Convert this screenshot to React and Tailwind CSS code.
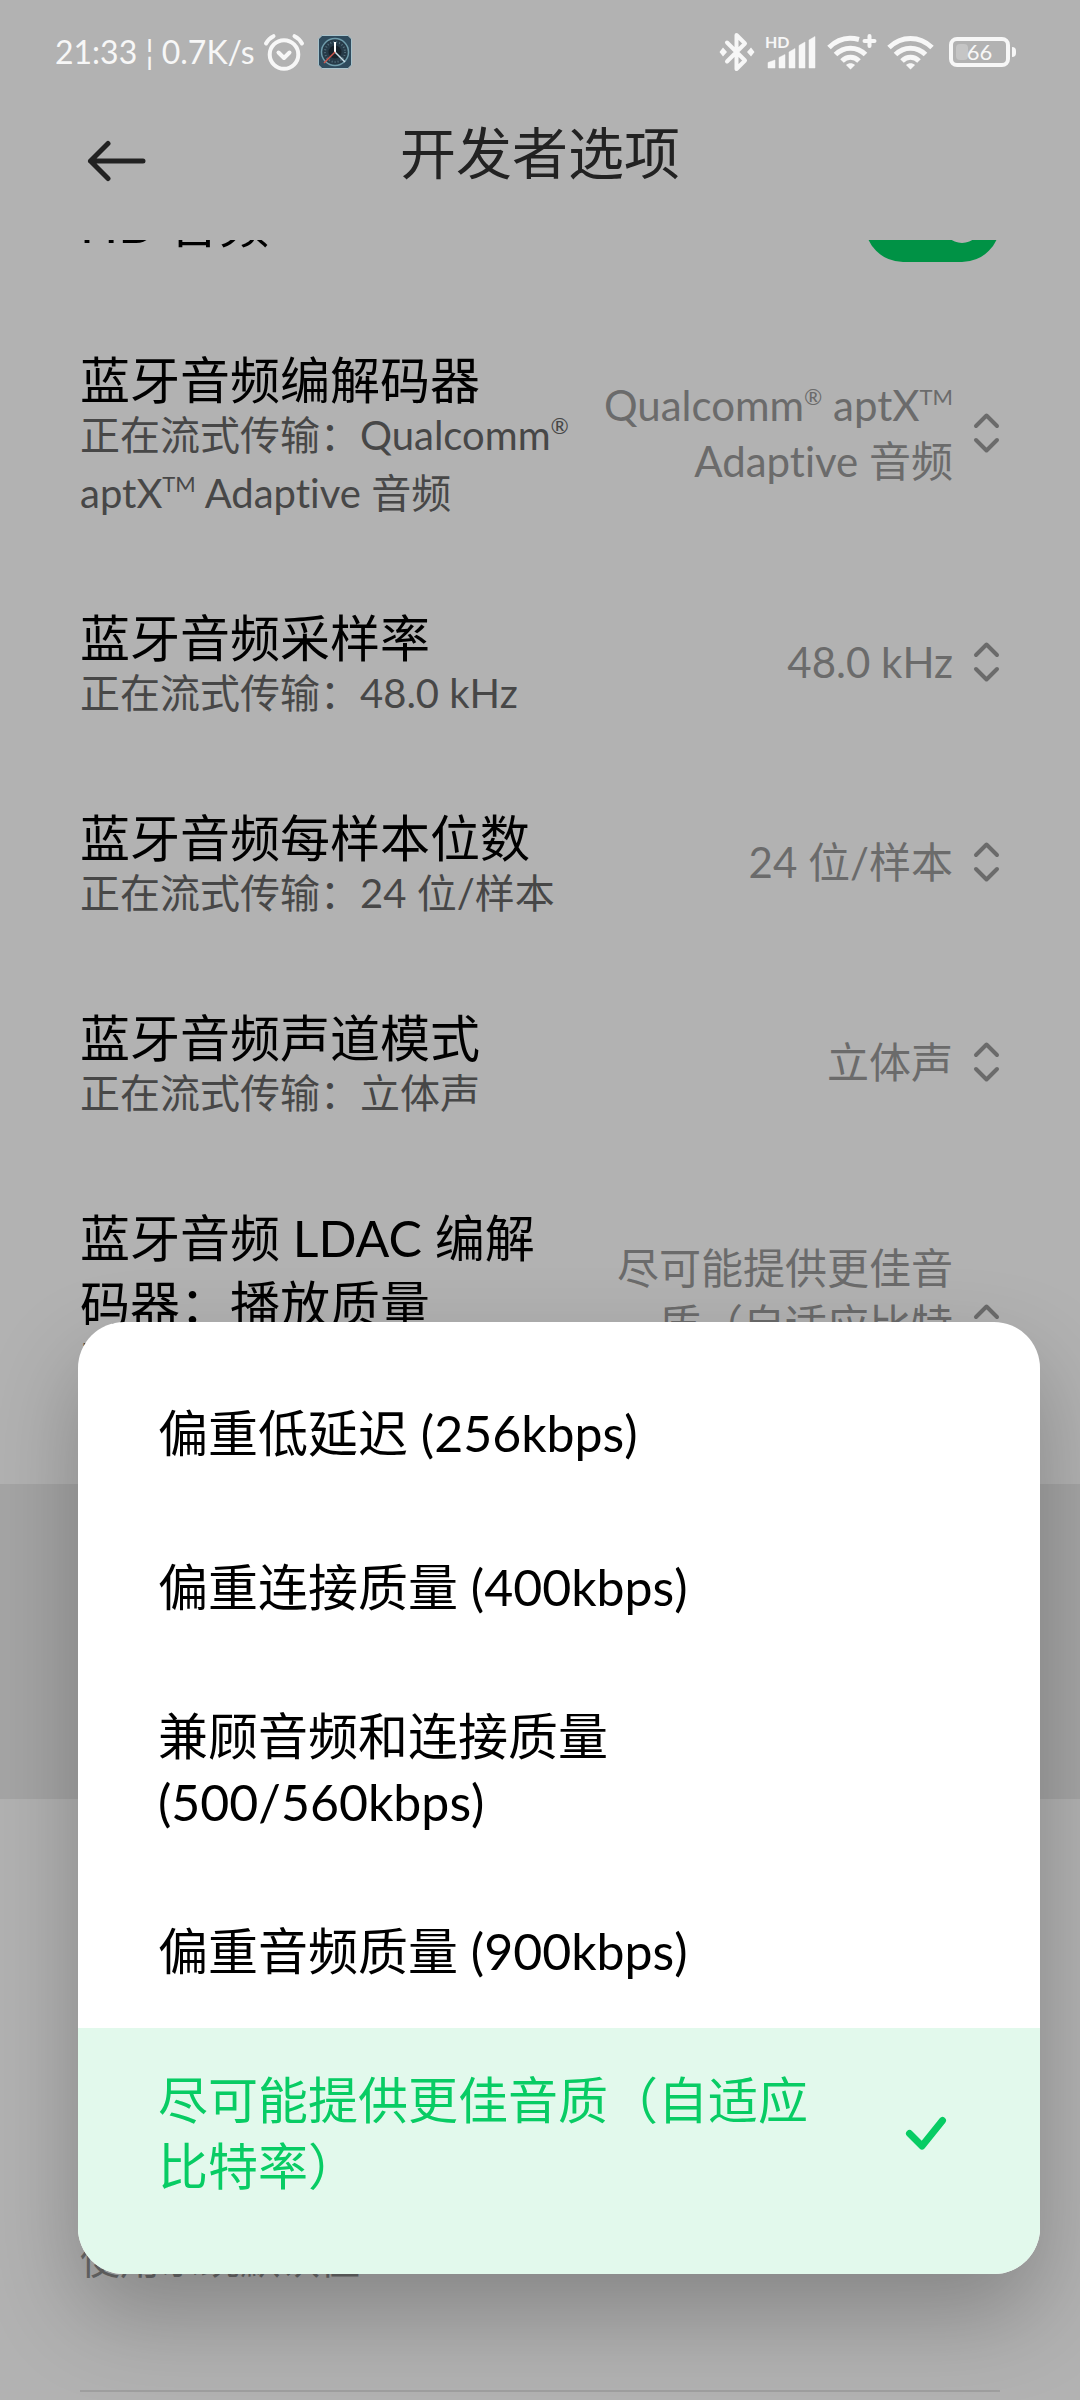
import { useState } from 'react';

const SETTINGS = [
  {
    title: '蓝牙音频编解码器',
    status: <>正在流式传输：Qualcomm<Sup>®</Sup> aptX<Sup>TM</Sup> Adaptive 音频</>,
    value: <>Qualcomm<Sup>®</Sup> aptX<Sup>TM</Sup> Adaptive 音频</>,
  },
  { title: '蓝牙音频采样率', status: '正在流式传输：48.0 kHz', value: '48.0 kHz' },
  { title: '蓝牙音频每样本位数', status: '正在流式传输：24 位/样本', value: '24 位/样本' },
  { title: '蓝牙音频声道模式', status: '正在流式传输：立体声', value: '立体声' },
  {
    title: '蓝牙音频 LDAC 编解码器：播放质量',
    status: '正在流式传输：尽可能提供更佳音质（自适应比特率）',
    value: '尽可能提供更佳音质（自适应比特率）',
  },
];

const OPTIONS = [
  '偏重低延迟 (256kbps)',
  '偏重连接质量 (400kbps)',
  '兼顾音频和连接质量 (500/560kbps)',
  '偏重音频质量 (900kbps)',
  '尽可能提供更佳音质（自适应比特率）',
];

function Sup({ children }) {
  return <sup className="-top-4 text-[22px] leading-none">{children}</sup>;
}

function AlarmIcon() {
  return (
    <svg width="42" height="40" viewBox="0 0 42 40" fill="none" stroke="currentColor" strokeLinecap="round" strokeLinejoin="round" aria-hidden="true">
      <circle cx="21" cy="22.5" r="14.3" strokeWidth="4" />
      <path d="M15.5 20.5 21 26l5.500-5.500" strokeWidth="4" />
      <path d="M3 11.500C4.500 8.500 7 6 10.500 4.200M39 11.500C37.500 8.500 35 6 31.500 4.200" strokeWidth="4" />
    </svg>
  );
}

function ClockAppIcon() {
  return (
    <svg width="34" height="34" viewBox="0 0 34 34" fill="none" aria-hidden="true">
      <path d="M4 .5h26L33.500 4v26L30 33.500H4L.5 30V4z" fill="#2f4b5d" stroke="#a9c3cc" />
      <circle cx="17" cy="17" r="13.500" fill="#263a48" stroke="#6f9cab" strokeWidth="1.500" />
      <circle cx="17" cy="17" r="10" stroke="#54707e" strokeWidth="2" strokeDasharray="1 2" />
      <circle cx="17" cy="17" r="6.500" fill="#17222b" />
      <path d="M17 7v10" stroke="#fff" strokeWidth="2" />
      <path d="m17 17 10 10" stroke="#c9dfe8" strokeWidth="1.500" />
      <path d="M17 17 6 28" stroke="#d0564c" strokeWidth="1.500" />
    </svg>
  );
}

function BluetoothIcon() {
  return (
    <svg width="36" height="40" viewBox="0 0 36 40" aria-hidden="true">
      <path d="m8 10.500 18 18L17.500 37V3L26 11.500l-18 18" fill="none" stroke="currentColor" strokeWidth="4" strokeLinecap="round" strokeLinejoin="round" />
      <path d="m4 15.500 4 4.500-4 4.500L.5 20zM32 15.500l3.500 4.500-3.500 4.500-4-4.500z" fill="currentColor" />
    </svg>
  );
}

function SignalIcon() {
  return (
    <svg width="52" height="36" viewBox="0 0 52 36" fill="currentColor" className="overflow-visible" aria-hidden="true">
      <text x="0" y="14" fontSize="16" fontWeight="700" fontFamily="Lato, sans-serif">HD</text>
      <path d="M3 34v-5.500L10 26v8zM14 34V23.500l6-3V34zM24 34V18l6-3.500V34zM34 34V11.500L40 8v26zM44 34V6l6-3.500V34z" stroke="currentColor" strokeWidth=".5" strokeLinejoin="round" />
    </svg>
  );
}

function WifiIcon({ plus }) {
  return (
    <svg width="50" height="36" viewBox="0 0 50 36" fill="none" stroke="currentColor" strokeWidth="5" aria-hidden="true">
      <path d={plus ? 'M2 13.500C10.500 5 21 2.500 32 5.500' : 'M2 13.500C14.500 1.500 32.500 1.500 45 13.500'} />
      <path d="M8.500 20.500c8.500-8.500 21.500-8.500 30 0" />
      <path d="M15 27c5-5 12-5 17 0" />
      <path d="M23.500 35.500 19 31c2.500-2.500 6.500-2.500 9 0z" fill="currentColor" stroke="none" />
      {plus && <path d="M42.500 2v10M37.500 7h10" strokeWidth="4" strokeLinecap="round" />}
    </svg>
  );
}

function Battery() {
  return (
    <div className="flex items-center gap-[2px]">
      <div className="relative flex h-[30px] w-[61px] items-center justify-center rounded-lg border-4 border-[#f7f7f7]">
        <span className="absolute top-[3px] bottom-[3px] left-[3px] w-3 rounded-sm bg-[#c5c5c5]" />
        <span className="relative text-[22px] leading-none">66</span>
      </div>
      <span className="h-[10px] w-1 rounded-r-sm bg-[#f7f7f7]" />
    </div>
  );
}

function StatusBar() {
  return (
    <div className="flex h-[104px] items-center pr-16 pl-[55px] text-[#f7f7f7]">
      <span className="text-[32px] leading-none">21:33 ¦ 0.7K/s</span>
      <div className="ml-2 flex items-center gap-[13px]">
        <AlarmIcon />
        <ClockAppIcon />
      </div>
      <div className="ml-auto flex items-center">
        <BluetoothIcon />
        <div className="ml-[10px] flex items-center gap-[10px]">
          <SignalIcon />
          <WifiIcon plus />
          <WifiIcon />
        </div>
        <div className="ml-3">
          <Battery />
        </div>
      </div>
    </div>
  );
}

function SelectArrows() {
  return (
    <svg width="27" height="42" viewBox="0 0 27 42" fill="none" stroke="#6b6b6b" strokeWidth="4" strokeLinecap="round" strokeLinejoin="round" className="shrink-0" aria-hidden="true">
      <path d="M3 14 13.500 3.500 24 14M3 28l10.500 10.500L24 28" />
    </svg>
  );
}

function SettingRow({ title, status, value }) {
  return (
    <button type="button" aria-haspopup="listbox" className="flex w-full items-center justify-between px-20 py-[45px] text-left">
      <span className="block w-[500px] shrink-0">
        <span className="block text-[50px] leading-[66px] text-black">{title}</span>
        <span className="-my-[7px] block text-[40px] leading-[58px] text-[#474747]">{status}</span>
      </span>
      <span className="flex items-center gap-5 pt-1">
        <span className="block max-w-[354px] text-right text-[42px] leading-[56px] text-[#6b6b6b]">{value}</span>
        <SelectArrows />
      </span>
    </button>
  );
}

function OptionMenu() {
  const [selected, setSelected] = useState(4);
  return (
    <div role="listbox" aria-label="播放质量" className="absolute right-10 bottom-[126px] left-[78px] overflow-hidden rounded-[46px] bg-white pt-[34px] shadow-[0_40px_90px_rgba(0,0,0,0.25)]">
      {OPTIONS.map((label, i) => (
        <button
          key={label}
          type="button"
          role="option"
          aria-selected={i === selected}
          onClick={() => setSelected(i)}
          className={
            'flex min-h-[154px] w-full items-center justify-between py-[39px] pr-[92px] pl-20 text-left text-[50px] leading-[66px] last:pb-[75px] ' +
            (i === selected ? 'bg-[#e2f9ec] text-[#08cc64]' : 'text-black')
          }
        >
          <span className="block w-[660px]">{label}</span>
          {i === selected && (
            <svg width="44" height="36" viewBox="0 0 44 36" fill="none" stroke="currentColor" strokeWidth="7" strokeLinecap="round" strokeLinejoin="round" aria-hidden="true">
              <path d="M5.500 18.500 18 31 38.500 5.500" />
            </svg>
          )}
        </button>
      ))}
    </div>
  );
}

export default function App() {
  return (
    <div className="relative flex min-h-screen flex-col overflow-hidden bg-[#b2b2b2] font-[Lato,'Noto_Sans_CJK_SC',sans-serif] [font-variant-ligatures:none]">
      <header>
        <StatusBar />
        <div className="grid h-[136px] grid-cols-[144px_1fr_144px] items-start">
          <button type="button" aria-label="返回" className="mt-9 ml-[86px]">
            <svg width="62" height="42" viewBox="0 0 62 42" fill="none" stroke="#222" strokeWidth="5" strokeLinecap="round" strokeLinejoin="round" aria-hidden="true">
              <path d="M57 21H4.500M22 3.500 4.500 21 22 38.500" />
            </svg>
          </button>
          <h1 className="mt-3 text-center text-[56px] leading-[74px] text-[#222]">开发者选项</h1>
        </div>
      </header>

      <main className="flex grow flex-col overflow-hidden">
        <label className="-mt-[94px] flex h-[156px] shrink-0 items-center justify-between px-20 text-[50px] leading-[66px] text-black">
          HD 音频
          <input
            type="checkbox"
            role="switch"
            defaultChecked
            className="flex h-[76px] w-[135px] appearance-none items-center rounded-full bg-[#009245] px-[19px] before:ml-auto before:size-[38px] before:rounded-full before:bg-[#b2b2b2]"
          />
        </label>

        {SETTINGS.map((item) => (
          <SettingRow key={item.title} {...item} />
        ))}
        <div className="h-[315px] shrink-0 bg-[#a5a5a5]" />

        <section className="mt-auto px-20">
          <p className="text-[40px] leading-[58px] text-[#6b6b6b]">使用系统默认值</p>
          <hr className="mt-[102px] mb-2 border-t-2 border-[#9f9f9f]" />
        </section>
      </main>

      <OptionMenu />
    </div>
  );
}
